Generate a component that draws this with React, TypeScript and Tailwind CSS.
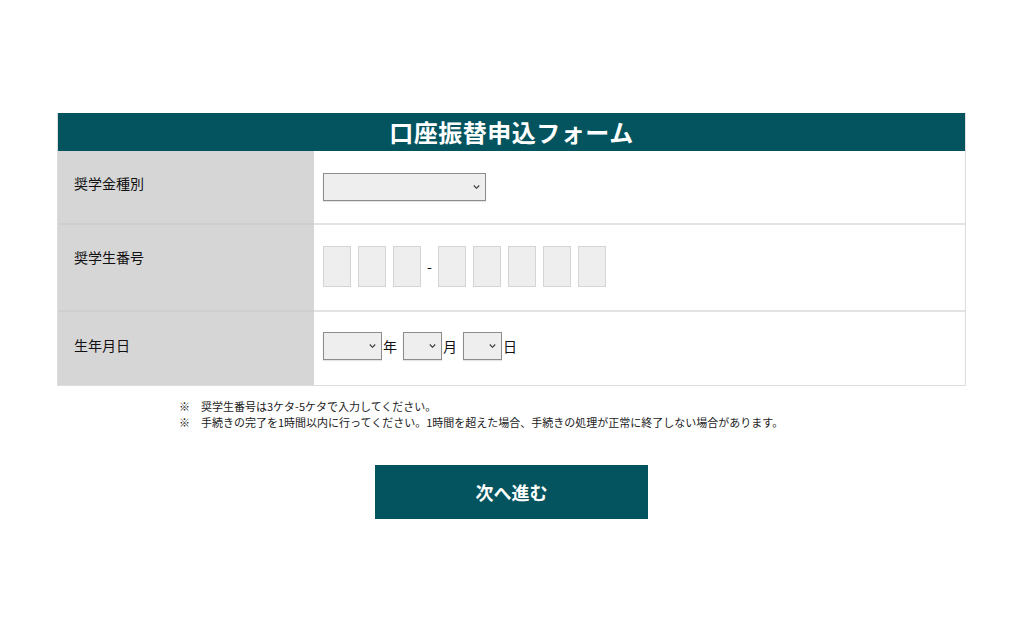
import React from "react";

const font = { fontFamily: '"Noto Sans CJK JP", "Noto Sans", sans-serif' };

function Chevron() {
  return (
    <svg width="7" height="5" viewBox="0 0 7 5" className="absolute right-[5px] top-1/2 -translate-y-1/2 pointer-events-none">
      <path d="M0.8 1 L3.5 3.8 L6.2 1" fill="none" stroke="#333" strokeWidth="1.1" />
    </svg>
  );
}

function Sel({ w }: { w: string }) {
  return (
    <div className={`relative h-[28px] ${w} border border-[#8c8c8c] bg-[#eeeeee] shadow-[0_1px_1px_rgba(0,0,0,0.1)]`}>
      <Chevron />
    </div>
  );
}

function Box() {
  return <div className="h-[41px] w-[28px] border border-[#d4d4d4] bg-[#eeeeee]" />;
}

export default function App() {
  return (
    <div className="w-[1024px] h-[640px] bg-white text-[#111]" style={font}>
      <div className="pt-[113px] pl-[57px]">
        <div className="w-[909px] border border-[#dddddd] border-t-0">
          <div className="h-[38px] bg-[#03545e] flex items-center justify-center text-white font-bold text-[24px] leading-none tracking-[0.5px]">
            口座振替申込フォーム
          </div>
          <div className="grid grid-cols-[256px_1fr]">
            <div className="h-[74px] bg-[#d6d6d6] border-b-2 border-[#cfcfcf] pl-[16px] pt-[22px] text-[14px] leading-[20px]">奨学金種別</div>
            <div className="h-[74px] border-b-2 border-[#e3e3e3] pl-[9px] pt-[22px]">
              <Sel w="w-[163px]" />
            </div>
            <div className="h-[87px] bg-[#d6d6d6] border-b-2 border-[#cfcfcf] pl-[16px] pt-[22px] text-[14px] leading-[20px]">奨学生番号</div>
            <div className="h-[87px] border-b-2 border-[#e3e3e3] pl-[9px] pt-[21px] flex items-start gap-[7px]">
              <Box />
              <Box />
              <Box />
              <span className="w-[3px] flex justify-center text-[14px] leading-[41px]">-</span>
              <Box />
              <Box />
              <Box />
              <Box />
              <Box />
            </div>
            <div className="h-[73px] bg-[#d6d6d6] pl-[16px] pt-[23px] text-[14px] leading-[20px]">生年月日</div>
            <div className="h-[73px] pl-[9px] pt-[20px] flex items-start text-[14px]">
              <Sel w="w-[59px]" />
              <span className="leading-[28px] ml-[1px]">年</span>
              <span className="w-[6px]" />
              <Sel w="w-[39px]" />
              <span className="leading-[28px] ml-[1px]">月</span>
              <span className="w-[6px]" />
              <Sel w="w-[39px]" />
              <span className="leading-[28px] ml-[1px]">日</span>
            </div>
          </div>
        </div>
        <div className="pl-[122px] pt-[12px] text-[11px] leading-[16px] text-[#222]">
          <p>※　奨学生番号は3ケタ-5ケタで入力してください。</p>
          <p>※　手続きの完了を1時間以内に行ってください。1時間を超えた場合、手続きの処理が正常に終了しない場合があります。</p>
        </div>
        <div className="pt-[35px] pl-[318px]">
          <button className="w-[273px] h-[54px] bg-[#03545e] text-white font-bold text-[18px] flex items-center justify-center">
            次へ進む
          </button>
        </div>
      </div>
    </div>
  );
}
